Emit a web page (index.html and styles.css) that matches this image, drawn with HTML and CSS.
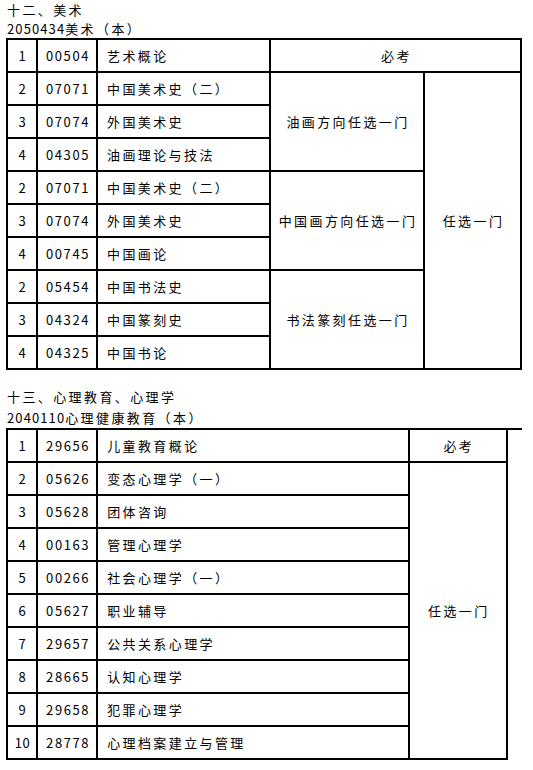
FILE: index.html
```html
<!DOCTYPE html>
<html lang="zh-CN">
<head>
<meta charset="utf-8">
<title>美术 / 心理教育</title>
<link rel="stylesheet" href="styles.css">
</head>
<body>
<section class="block block-art">
  <div class="title">十二、美术</div>
  <div class="subtitle"><span class="digits">2050434</span>美术（本）</div>
  <table class="grid">
    <colgroup>
      <col class="c-no"><col class="c-code"><col class="c-name1"><col class="c-dir"><col class="c-pick">
    </colgroup>
    <tr><td class="no">1</td><td class="code">00504</td><td class="name">艺术概论</td><td class="mid" colspan="2">必考</td></tr>
    <tr><td class="no">2</td><td class="code">07071</td><td class="name">中国美术史（二）</td><td class="mid" rowspan="3">油画方向任选一门</td><td class="mid" rowspan="9">任选一门</td></tr>
    <tr><td class="no">3</td><td class="code">07074</td><td class="name">外国美术史</td></tr>
    <tr><td class="no">4</td><td class="code">04305</td><td class="name">油画理论与技法</td></tr>
    <tr><td class="no">2</td><td class="code">07071</td><td class="name">中国美术史（二）</td><td class="mid" rowspan="3">中国画方向任选一门</td></tr>
    <tr><td class="no">3</td><td class="code">07074</td><td class="name">外国美术史</td></tr>
    <tr><td class="no">4</td><td class="code">00745</td><td class="name">中国画论</td></tr>
    <tr><td class="no">2</td><td class="code">05454</td><td class="name">中国书法史</td><td class="mid" rowspan="3">书法篆刻任选一门</td></tr>
    <tr><td class="no">3</td><td class="code">04324</td><td class="name">中国篆刻史</td></tr>
    <tr><td class="no">4</td><td class="code">04325</td><td class="name">中国书论</td></tr>
  </table>
</section>
<section class="block block-psy">
  <div class="title">十三、心理教育、心理学</div>
  <div class="subtitle"><span class="digits">2040110</span>心理健康教育（本）</div>
  <table class="grid">
    <colgroup>
      <col class="c-no"><col class="c-code"><col class="c-name2"><col class="c-pick2"><col class="c-extra">
    </colgroup>
    <tr><td class="no">1</td><td class="code">29656</td><td class="name">儿童教育概论</td><td class="mid">必考</td><td class="extra" rowspan="10"></td></tr>
    <tr><td class="no">2</td><td class="code">05626</td><td class="name">变态心理学（一）</td><td class="mid" rowspan="9">任选一门</td></tr>
    <tr><td class="no">3</td><td class="code">05628</td><td class="name">团体咨询</td></tr>
    <tr><td class="no">4</td><td class="code">00163</td><td class="name">管理心理学</td></tr>
    <tr><td class="no">5</td><td class="code">00266</td><td class="name">社会心理学（一）</td></tr>
    <tr><td class="no">6</td><td class="code">05627</td><td class="name">职业辅导</td></tr>
    <tr><td class="no">7</td><td class="code">29657</td><td class="name">公共关系心理学</td></tr>
    <tr><td class="no">8</td><td class="code">28665</td><td class="name">认知心理学</td></tr>
    <tr><td class="no">9</td><td class="code">29658</td><td class="name">犯罪心理学</td></tr>
    <tr><td class="no">10</td><td class="code">28778</td><td class="name">心理档案建立与管理</td></tr>
  </table>
</section>
</body>
</html>
```
FILE: styles.css
```css
html, body {
  margin: 0;
  padding: 0;
  background: #fff;
}
body {
  padding-left: 6px;
  font-family: "Noto Sans CJK SC", "Noto Sans", sans-serif;
  font-weight: 400;
  font-size: 13px;
  color: #000;
  letter-spacing: 2.4px;
}
.digits {
  letter-spacing: 1.1px;
}
.block-art .title,
.block-art .subtitle {
  line-height: 19px;
  height: 19px;
}
.block-psy {
  margin-top: 17px;
}
.block-psy .title {
  line-height: 20px;
  height: 21px;
}
.block-psy .subtitle {
  line-height: 20px;
  height: 20px;
}
.title, .subtitle {
  padding-left: 1px;
  white-space: nowrap;
}
.grid {
  border-collapse: collapse;
  table-layout: fixed;
  width: 516px;
}
.grid tr {
  height: 33px;
}
.grid td {
  border: 2px solid #000;
  padding: 0;
  vertical-align: middle;
  white-space: nowrap;
  line-height: 16px;
}
.c-no { width: 30px; }
.c-code { width: 60px; }
.c-name1 { width: 173px; }
.c-dir { width: 154px; }
.c-pick { width: 97px; }
.c-name2 { width: 311px; }
.c-pick2 { width: 98px; }
.c-extra { width: 15px; }
.grid td.no {
  text-align: center;
  letter-spacing: 0.6px;
  padding-left: 1px;
}
.grid td.code {
  text-align: center;
  letter-spacing: 1.6px;
  padding-left: 2px;
}
.grid td.name {
  text-align: left;
  padding-left: 9px;
}
.grid td.mid {
  text-align: center;
  padding-left: 2px;
}
.grid td.extra {
  border: none;
  border-top: 2px solid #000;
}
```
